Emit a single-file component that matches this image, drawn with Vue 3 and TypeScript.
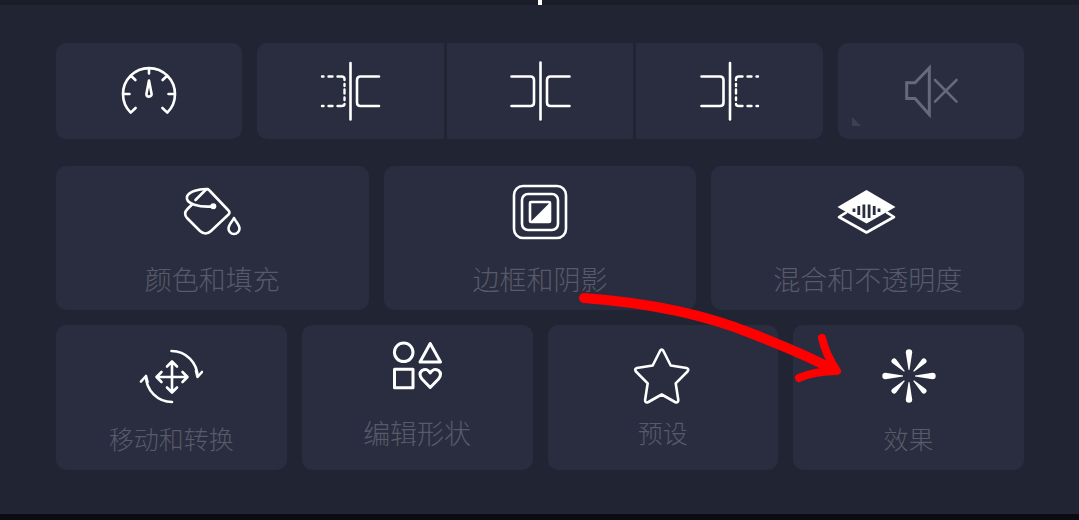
<script setup lang="ts">
interface Tile {
  id: string
  label: string
}

const styleTiles: Tile[] = [
  { id: 'fill', label: '颜色和填充' },
  { id: 'border', label: '边框和阴影' },
  { id: 'blend', label: '混合和不透明度' },
]

const actionTiles: Tile[] = [
  { id: 'move', label: '移动和转换' },
  { id: 'shape', label: '编辑形状' },
  { id: 'preset', label: '预设' },
  { id: 'effects', label: '效果' },
]

const petalAngles: number[] = [0, 90, 180, 270]
</script>

<template>
  <main class="editor">
    <div class="timeline"><span class="playhead"></span></div>

    <div class="panel">
      <div class="row tools">
        <button class="tile" type="button" aria-label="速度">
          <svg class="icon" viewBox="-32 -32 64 64">
            <path d="M-18.3 21.6A26 26 0 1 1 18.3 21.6M-18.3 21.6L-13.4 17M18.3 21.6L13.4 17M-26 3H-19.5M26 3H19.5M-17.8 -15L-13.6 -11M17.8 -15L13.6 -11M0 -23V-17.5" />
            <path d="M0 -10.5L-2.6 3Q-2.6 5.6 0 5.6Q2.6 5.6 2.6 3Z" />
          </svg>
        </button>

        <div class="split">
          <button class="tile" type="button" aria-label="修剪左侧">
            <svg class="icon" viewBox="-32 -32 64 64">
              <path d="M0.5 -28V28.5M29 -14.5H10.5Q7 -14.5 7 -11V11.5Q7 15 10.5 15H29" />
              <path class="dashed" d="M-28 -14.5H-26.5M-21.5 -14.5H-17.5M-12.5 -14.5H-8.5Q-5.5 -14.5 -5.5 -12V-11M-5.5 -7V-5M-5.5 -1.5V2.5M-5.5 6.5V9M-5.5 13Q-5.5 15 -8.5 15H-12.5M-17.5 15H-21.5M-26.5 15H-28" />
            </svg>
          </button>
          <button class="tile" type="button" aria-label="分割">
            <svg class="icon" viewBox="-32 -32 64 64">
              <path d="M0.5 -28.5V28.5M29.5 -14.5H10.5Q7 -14.5 7 -11V11.5Q7 15 10.5 15H29.5M-28.5 -14.5H-9.5Q-6 -14.5 -6 -11V11.5Q-6 15 -9.5 15H-28.5" />
            </svg>
          </button>
          <button class="tile" type="button" aria-label="修剪右侧">
            <svg class="icon" viewBox="-32 -32 64 64">
              <path d="M0 -28V28.5M-28.5 -14.5H-10Q-6.5 -14.5 -6.5 -11V11.5Q-6.5 15 -10 15H-28.5" />
              <path class="dashed" d="M28 -14.5H26.5M21.5 -14.5H17.5M12.5 -14.5H9Q6 -14.5 6 -12V-11M6 -7V-5M6 -1.5V2.5M6 6.5V9M6 13Q6 15 9 15H12.5M17.5 15H21.5M26.5 15H28" />
            </svg>
          </button>
        </div>

        <button class="tile mute" type="button" aria-label="静音">
          <svg class="icon" viewBox="-32 -32 64 64">
            <path class="speaker" d="M-24.3 -8.3H-16L-1.7 -23V23.5L-16 7.6H-24.3Z" />
            <path d="M4 -11L25.5 10.7M25.5 -11L4 10.7" />
          </svg>
          <svg class="corner" viewBox="0 0 9 9"><path d="M0 0L9 9H0Z" /></svg>
        </button>
      </div>

      <div class="row styles">
        <button v-for="tile in styleTiles" :key="tile.id" class="tile labelled" :class="tile.id" type="button">
          <svg v-if="tile.id === 'fill'" class="icon" viewBox="-32 -32 64 64">
            <path d="M-20 -7.5L-24.5 -3Q-29 1.5 -25 6L-12 19Q-6.5 24 -1 19L16.5 2.5Q18.5 0.5 16.5 -1.5L-2.5 -21.5Q-4.500 -24 -7 -21.500L-16.500 -12" />
            <path d="M-4 -23C-13 -23.5 -23 -20.5 -25 -15.5C-27 -8 -12 -4.5 1 -5.6" />
            <circle class="solid" cx="1.3" cy="-5.7" r="3" />
            <path d="M22 6C20 10 16.5 13 16.5 16.5A5.500 5.500 0 0 0 27.500 16.500C27.500 13 24 10 22 6Z" />
          </svg>
          <svg v-else-if="tile.id === 'border'" class="icon" viewBox="-32 -32 64 64">
            <rect x="-26" y="-26" width="52" height="52" rx="9" />
            <rect x="-18" y="-18" width="36" height="36" rx="6" />
            <rect x="-10" y="-10" width="20" height="20" rx="1" />
            <path class="solid" d="M10.5 -10V10.5H-10Z" />
          </svg>
          <svg v-else class="icon" viewBox="-32 -32 64 64">
            <path class="solid" d="M-1.500 -22L27.500 -5L-1.500 11.500L-30.500 -5Z" />
            <path d="M-22 0.700L-29 5L-1.500 20.500L26 5L19 0.700" />
            <path class="slot" d="M-14 -3.500V0M-9.200 -6V3M-4.100 -7.500V6M1.100 -7.500V6M6.200 -6V3M11 -3.500V0" />
          </svg>
          <span class="label">{{ tile.label }}</span>
        </button>
      </div>

      <div class="row actions">
        <button v-for="tile in actionTiles" :key="tile.id" class="tile labelled" :class="tile.id" type="button">
          <svg v-if="tile.id === 'move'" class="icon" viewBox="-32 -32 64 64">
            <path d="M1 -14.5V16M-14.5 1H16M-4 -9.5L1 -14.5L6 -9.5M-4 11.5L1 16.5L6 11.5M-9.5 -4L-14.5 1L-9.5 6M11.5 -4L16.5 1L11.5 6" />
            <path d="M0.5 -25A26 26 0 0 1 26.5 1M25 -5L26.5 1L31 -4M1 26A26 26 0 0 1 -25 0M-30 5.5L-25 0L-23.5 6" />
          </svg>
          <svg v-else-if="tile.id === 'shape'" class="icon heavy" viewBox="-32 -32 64 64">
            <circle cx="-13.3" cy="-13.7" r="9.3" />
            <path d="M13.2 -22.5L23.5 -4H3Z" />
            <rect x="-22.5" y="3.3" width="18.5" height="18.5" />
            <path d="M13.2 21.5L5 13Q1 8 5 4.5Q10 1.5 13.2 7Q16.5 1.5 21.5 4.5Q25.5 8 21.5 13Z" />
          </svg>
          <svg v-else-if="tile.id === 'preset'" class="icon" viewBox="-32 -32 64 64">
            <path d="M-3 -25Q-1.3 -28 0.4 -25L7.7 -10.5L23.5 -8Q26.5 -7 24.5 -4.5L12.7 7.3L15.3 24Q15.3 27.5 12 26L-1.3 18.5L-14.6 26Q-18 27.5 -17.9 24L-15.3 7.3L-27.1 -4.5Q-29 -7 -26.1 -8L-10.3 -10.5Z" />
          </svg>
          <svg v-else class="icon" viewBox="-32 -32 64 64">
            <g v-for="angle in petalAngles" :key="angle" :transform="`rotate(${angle})`" class="petal">
              <path d="M-0.5 -6L-3.2 -23.5A3.2 3.2 0 0 1 3.2 -23.5L0.5 -6Z" />
              <path transform="rotate(45)" d="M-0.5 -6.5L-2.7 -21A2.7 2.7 0 0 1 2.7 -21L0.5 -6.5Z" />
            </g>
          </svg>
          <span class="label">{{ tile.label }}</span>
        </button>
      </div>
    </div>

    <div class="footer"></div>

    <svg class="pointer" viewBox="0 0 1079 520" aria-hidden="true">
      <path class="shaft" d="M584 298C651 303 704 314 753 334C786 347 812 358 832 369" />
      <path d="M822 338C825 351 830 361 837 371C823 371 808 374 799 378" />
    </svg>
  </main>
</template>

<style>
body {
  margin: 0;
  background: #212432;
}
</style>

<style scoped>
.editor {
  position: relative;
  display: flex;
  flex-direction: column;
  min-height: 100vh;
  background: #212432;
  font-family: "Noto Sans CJK SC", sans-serif;
}

.timeline {
  display: flex;
  justify-content: center;
  height: 5px;
  background: #1b1e28;
}

.playhead {
  width: 4px;
  background: #fff;
}

.panel {
  flex: 1;
  padding: 38px 55px 44px 56px;
}

.row {
  display: grid;
  gap: 15px;
}

.tools {
  grid-template-columns: 186fr 566fr 186fr;
  margin-bottom: 27px;
}

.styles {
  grid-template-columns: repeat(3, 1fr);
  margin-bottom: 15px;
}

.actions {
  grid-template-columns: repeat(4, 1fr);
}

.split {
  display: grid;
  grid-template-columns: repeat(3, 1fr);
  gap: 3px;
  border-radius: 10px;
  overflow: hidden;
}

.tile {
  display: flex;
  flex-direction: column;
  align-items: center;
  margin: 0;
  padding: 16px 0;
  border: 0;
  border-radius: 10px;
  background: #292d3f;
  color: #fff;
  font: inherit;
  cursor: pointer;
}

.split .tile {
  border-radius: 0;
}

.labelled {
  gap: 21px;
  padding: 14px 0 17px;
}

.actions .labelled {
  gap: 16px;
  padding: 19px 0 18px;
}

.actions .shape {
  gap: 21px;
  padding-top: 9px;
}

.actions .preset {
  gap: 10px;
}

.label {
  color: #585a69;
  font-size: 27px;
  font-weight: 300;
  line-height: 28px;
}

.move .label,
.preset .label,
.effects .label {
  font-size: 25px;
}

.icon {
  display: block;
  width: 64px;
  height: 64px;
  fill: none;
  stroke: currentColor;
  stroke-width: 2.6;
  stroke-linecap: round;
  stroke-linejoin: round;
}

.heavy {
  stroke-width: 3;
}

.dashed {
  stroke-width: 2.4;
}

.solid,
.petal {
  fill: currentColor;
  stroke: none;
}

.slot {
  stroke: #292d3f;
  stroke-width: 2.8;
  stroke-linecap: butt;
}

.mute {
  position: relative;
  color: #666979;
}

.speaker {
  stroke-width: 3;
  stroke-linecap: butt;
  stroke-linejoin: miter;
}

.corner {
  position: absolute;
  left: 14px;
  bottom: 13px;
  width: 9px;
  height: 9px;
  fill: #3c4152;
}

.footer {
  height: 6px;
  background: #0b0b11;
}

.pointer {
  position: absolute;
  top: 0;
  left: 0;
  width: 100%;
  fill: none;
  stroke: #f00;
  stroke-width: 8;
  stroke-linecap: round;
  stroke-linejoin: round;
  pointer-events: none;
}

.shaft {
  stroke-width: 10;
}
</style>
